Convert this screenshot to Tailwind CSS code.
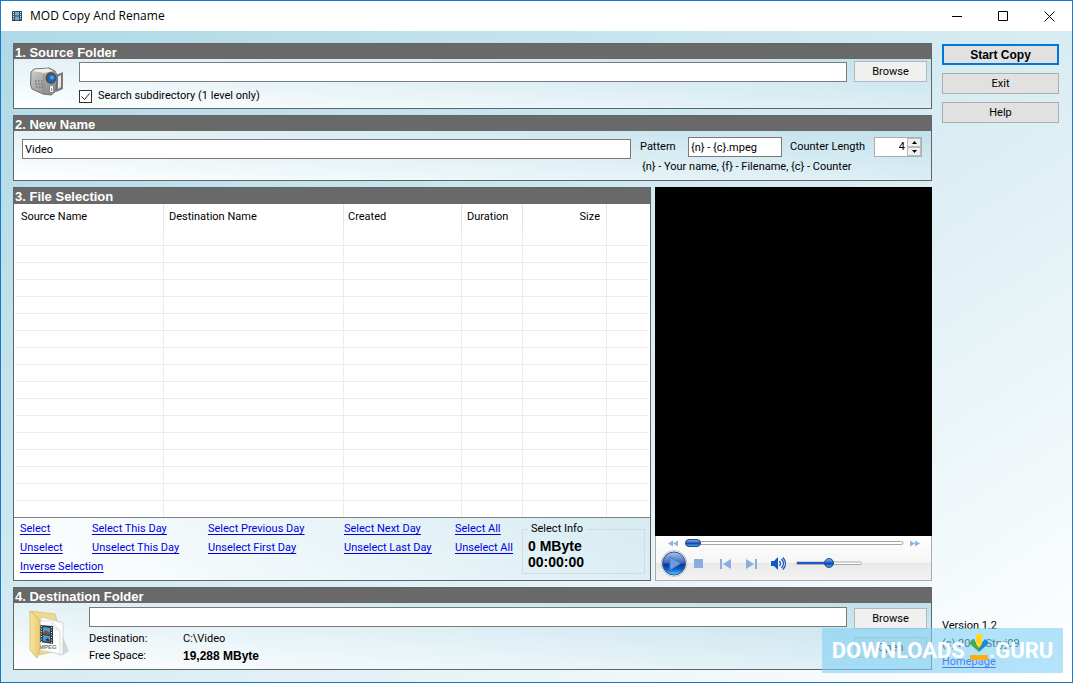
<!DOCTYPE html>
<html lang="en">
<head>
<meta charset="utf-8">
<title>MOD Copy And Rename</title>
<script src="https://cdn.jsdelivr.net/npm/@tailwindcss/browser@4"></script>
</head>
<body class="relative flex min-h-screen flex-col border border-[#1a78cc] bg-linear-to-br from-[#add8e6] to-white font-[Roboto,'Liberation_Sans',sans-serif] text-[11px] leading-4 text-black">
  <header class="flex h-[30px] shrink-0 items-center bg-white pl-[11px]">
    <svg class="mr-2 h-[10px] w-[10px]" viewBox="0 0 10 10"><path fill="#3b4c5c" d="M0 0h10v10H0z"/><path fill="#69aed6" d="M3 1h4v3.5H3zM3 5.5h4V9H3z"/><path fill="#e8eef2" d="M1 1h1v1H1zM1 3h1v1H1zM1 5h1v1H1zM1 7h1v1H1zM8 1h1v1H8zM8 3h1v1H8zM8 5h1v1H8zM8 7h1v1H8z"/></svg>
    <h1 class="flex-1 font-['Open_Sans','Noto_Sans',sans-serif] text-[12px]">MOD Copy And Rename</h1>
    <button class="flex h-[30px] w-[45px] items-center justify-center" aria-label="Minimize"><svg class="h-[11px] w-[11px]" viewBox="0 0 11 11"><path stroke="#000" d="M0 5.5h10"/></svg></button>
    <button class="flex h-[30px] w-[46px] items-center justify-center" aria-label="Maximize"><svg class="h-[11px] w-[11px]" viewBox="0 0 11 11"><path fill="none" stroke="#000" d="M.5.5h9v9h-9z"/></svg></button>
    <button class="flex h-[30px] w-[46px] items-center justify-center" aria-label="Close"><svg class="h-[11px] w-[11px]" viewBox="0 0 11 11"><path stroke="#000" d="M.5.5l10 10M10.500.5l-10 10"/></svg></button>
  </header>

  <div class="flex flex-1 gap-[10px] p-3 pr-[13px]">
    <main class="flex min-w-0 flex-1 flex-col gap-[6px]">
      <section class="border border-[#5f6668] bg-linear-to-tr from-white to-[#b9dde9]">
        <h2 class="h-[15px] bg-[#696969] pl-px font-['Liberation_Sans',Arial,sans-serif] text-[13px] leading-[18px] font-bold text-white">1. Source Folder</h2>
        <div class="flex h-[49px] pr-1">
          <svg class="mt-2 ml-4 h-[30px] w-[33px] shrink-0" viewBox="0 0 33 30">
            <defs><linearGradient id="cam" x2="1" y2="1"><stop stop-color="#cfcfcc"/><stop offset="1" stop-color="#7f7f7d"/></linearGradient></defs>
            <path fill="#77777c" d="M26 8l7-3v17l-7 3z"/><path fill="#e6e6f2" d="M28 9.500l3-1.500v12L28 22z"/>
            <path fill="url(#cam)" stroke="#6f6f6d" d="M1 5L4 2l15-1 6 3 2 4-1 16-5 4-8-1L2 22 .5 18z"/>
            <path fill="#efefed" d="M3 4l2-1.500 13-1 5 2.500-9 2z"/><path stroke="#777" d="M14 7v19" opacity=".5"/>
            <path stroke="#777" stroke-width="1.500" stroke-dasharray="1.500 1.500" d="M5 14h8M5 17h8M6 20h7"/>
            <ellipse cx="21" cy="11" rx="5.500" ry="6" fill="#4d5155"/><circle cx="21.500" cy="11.500" r="4" fill="#1b64b4"/><circle cx="22" cy="10.500" r="2" fill="#4fa2ea"/>
            <path fill="#eee" stroke="#888" d="M19.500 18.500h4v7h-4z"/><path fill="#999" d="M21 21h1v3h-1z"/>
          </svg>
          <div class="ml-4 flex-1 pt-[3px]">
            <input aria-label="Source folder" class="block h-5 w-full border border-[#7a7a7a] bg-white px-1 outline-none">
            <label class="mt-[6px] flex h-4 items-center gap-[6px]"><input type="checkbox" checked class="h-[13px] w-[13px] appearance-none border border-[#333] bg-white bg-[url('data:image/svg+xml,%3Csvg%20xmlns=%22http://www.w3.org/2000/svg%22%20viewBox=%220%200%2011%2011%22%3E%3Cpath%20d=%22M1.500%205.500l3%203%205-6%22%20fill=%22none%22%20stroke=%22%23222%22/%3E%3C/svg%3E')]">Search subdirectory (1 level only)</label>
          </div>
          <button class="mt-[2px] ml-[7px] h-[21px] w-[73px] border border-[#b5b8ba] bg-[#f0f0f0]">Browse</button>
        </div>
      </section>

      <section class="border border-[#5f6668] bg-linear-to-tr from-white to-[#b9dde9]">
        <h2 class="h-[15px] bg-[#696969] pl-px font-['Liberation_Sans',Arial,sans-serif] text-[13px] leading-[18px] font-bold text-white">2. New Name</h2>
        <div class="flex h-[49px] gap-[9px] pr-[9px] pl-2">
          <input aria-label="New name" value="Video" class="mt-2 h-5 min-w-0 flex-1 border border-[#7a7a7a] bg-white px-[2px] outline-none">
          <div class="w-[282px] pt-[6px]">
            <div class="flex h-5 items-center">
              <label for="pattern" class="w-12">Pattern</label>
              <input id="pattern" value="{n} - {c}.mpeg" class="h-5 w-[94px] border border-[#7a7a7a] bg-white px-[2px] outline-none">
              <label for="length" class="ml-2 flex-1">Counter Length</label>
              <div class="flex h-5 w-12 border border-[#abadb3] bg-white">
                <input id="length" value="4" class="min-w-0 flex-1 pr-[2px] text-right outline-none">
                <div class="flex w-[14px] flex-col">
                  <button aria-label="Increase" class="flex flex-1 items-center justify-center border border-[#bbb] bg-[#f0f0f0]"><svg class="h-[3px] w-[5px]" viewBox="0 0 5 3"><path d="M0 3h5L2.500 0z"/></svg></button>
                  <button aria-label="Decrease" class="flex flex-1 items-center justify-center border border-[#bbb] bg-[#f0f0f0]"><svg class="h-[3px] w-[5px]" viewBox="0 0 5 3"><path d="M0 0h5L2.500 3z"/></svg></button>
                </div>
              </div>
            </div>
            <p class="mt-[2px] pl-[2px]">{n} - Your name, {f} - Filename, {c} - Counter</p>
          </div>
        </div>
      </section>

      <div class="flex flex-1 gap-1">
        <section class="flex min-w-0 flex-1 flex-col border border-[#5f6668] bg-linear-to-tr from-white to-[#b9dde9]">
          <h2 class="h-4 bg-[#696969] pl-px font-['Liberation_Sans',Arial,sans-serif] text-[13px] leading-[18px] font-bold text-white">3. File Selection</h2>
          <div class="flex-1 border-b border-[#7a8286] bg-white px-px">
            <table class="w-full table-fixed border-separate border-spacing-0 [&_td]:h-[17px] [&_td]:border-r [&_td]:border-b [&_td]:border-[#ececec] [&_td]:p-0 [&_td:last-child]:border-r-0 [&_th]:h-[25px] [&_th]:border-r [&_th]:border-[#e5e5e5] [&_th]:p-0 [&_th]:text-left [&_th]:font-normal [&_th:last-child]:border-r-0">
              <thead><tr><th class="w-[149px]"><span class="pl-[6px]">Source Name</span></th><th class="w-[180px]"><span class="pl-[5px]">Destination Name</span></th><th class="w-[118px]"><span class="pl-[4px]">Created</span></th><th class="w-[61px]"><span class="pl-[5px]">Duration</span></th><th class="w-[84px]"><span class="block pr-[6px] text-right">Size</span></th><th></th></tr></thead>
              <tbody>
                <tr><td></td><td></td><td></td><td></td><td></td><td></td></tr>
                <tr><td></td><td></td><td></td><td></td><td></td><td></td></tr>
                <tr><td></td><td></td><td></td><td></td><td></td><td></td></tr>
                <tr><td></td><td></td><td></td><td></td><td></td><td></td></tr>
                <tr><td></td><td></td><td></td><td></td><td></td><td></td></tr>
                <tr><td></td><td></td><td></td><td></td><td></td><td></td></tr>
                <tr><td></td><td></td><td></td><td></td><td></td><td></td></tr>
                <tr><td></td><td></td><td></td><td></td><td></td><td></td></tr>
                <tr><td></td><td></td><td></td><td></td><td></td><td></td></tr>
                <tr><td></td><td></td><td></td><td></td><td></td><td></td></tr>
                <tr><td></td><td></td><td></td><td></td><td></td><td></td></tr>
                <tr><td></td><td></td><td></td><td></td><td></td><td></td></tr>
                <tr><td></td><td></td><td></td><td></td><td></td><td></td></tr>
                <tr><td></td><td></td><td></td><td></td><td></td><td></td></tr>
                <tr><td></td><td></td><td></td><td></td><td></td><td></td></tr>
                <tr><td></td><td></td><td></td><td></td><td></td><td></td></tr>
                <tr class="[&>td]:h-4 [&>td]:border-b-0"><td></td><td></td><td></td><td></td><td></td><td></td></tr>
              </tbody>
            </table>
          </div>
          <div class="flex h-[62px] pr-[5px] pl-[6px]">
            <nav class="grid flex-1 auto-rows-[19px] grid-cols-[72px_116px_136px_111px_1fr] pt-[3px] whitespace-nowrap text-[#0000e0] underline underline-offset-2">
              <a href="#">Select</a><a href="#">Select This Day</a><a href="#">Select Previous Day</a><a href="#">Select Next Day</a><a href="#">Select All</a>
              <a href="#">Unselect</a><a href="#">Unselect This Day</a><a href="#">Unselect First Day</a><a href="#">Unselect Last Day</a><a href="#">Unselect All</a>
              <a href="#">Inverse Selection</a>
            </nav>
            <fieldset class="mt-[3px] h-[53px] w-[123px] border border-[#cfdde2] pl-[5px] font-['Liberation_Sans',Arial,sans-serif] text-[14px] leading-4 font-bold">
              <legend class="px-[3px] font-[Roboto,'Liberation_Sans',sans-serif] text-[11px] leading-4 font-normal">Select Info</legend>
              <p class="pt-px">0 MByte</p><p>00:00:00</p>
            </fieldset>
          </div>
        </section>

        <section class="flex w-[277px] shrink-0 flex-col" aria-label="Preview">
          <div class="flex-1 bg-black"></div>
          <div class="h-[45px] border border-t-0 border-[#a9acae] bg-linear-to-b from-white via-[#f4f4f4] to-[#e4e4e4]">
            <svg class="h-[44px] w-full" viewBox="0 0 275 44">
              <defs>
                <linearGradient id="bar" x2="0" y2="1"><stop stop-color="#fff"/><stop offset=".6" stop-color="#f6f6f6"/><stop offset=".62" stop-color="#e9e9e9"/><stop offset="1" stop-color="#f3f3f3"/></linearGradient>
                <linearGradient id="pill" x2="0" y2="1"><stop stop-color="#8eb5ee"/><stop offset=".45" stop-color="#2d62c8"/><stop offset=".5" stop-color="#0a36a6"/><stop offset="1" stop-color="#55baf6"/></linearGradient>
                <linearGradient id="orb" x2="0" y2="1"><stop stop-color="#a9c2e8"/><stop offset=".48" stop-color="#3d68b8"/><stop offset=".52" stop-color="#0c3596"/><stop offset=".75" stop-color="#1259c8"/><stop offset="1" stop-color="#55d2ff"/></linearGradient>
              </defs>
              <path fill="url(#bar)" d="M0 0h275v44H0z"/>
              <path fill="#8db5e6" d="M12 7.500l5-3v6zM17 7.500l5-3v6zM254 4.500l5 3-5 3zM259 4.500l5 3-5 3z"/>
              <rect x="36" y="5.500" width="211" height="3" rx="1.500" fill="#fff" stroke="#a5a5a5"/>
              <rect x="29.500" y="3.500" width="15" height="7" rx="3.500" fill="url(#pill)" stroke="#244993"/>
              <circle cx="18" cy="27.500" r="13" fill="#f6f7fa" stroke="#c5c9d2"/><circle cx="18" cy="27.500" r="11.500" fill="url(#orb)" stroke="#34558e"/>
              <path fill="#6f9ae0" stroke="#4f7fc8" d="M14 21l10.500 6.500L14 34z"/>
              <path fill="#8bade2" d="M38 23h9v9h-9zM64 23h2v10h-2zM75 23v10l-8-5zM90 23v10l8-5zM99 23h2v10h-2z"/>
              <path fill="#1754c4" d="M115 25h3l4-4v13l-4-4h-3z"/><path fill="none" stroke="#1754c4" stroke-width="1.300" d="M123.500 25q2 2.500 0 5M125.500 23q4 4.500 0 9M127 21.500q5 6 0 12"/>
              <rect x="140.500" y="26" width="65" height="2.500" rx="1" fill="#fff" stroke="#aaa"/><path stroke="#1c59cf" stroke-width="2" d="M141 27h30"/>
              <circle cx="173" cy="27" r="4.500" fill="url(#pill)" stroke="#244993"/>
            </svg>
          </div>
        </section>
      </div>

      <section class="border border-[#5f6668] bg-linear-to-tr from-white to-[#b9dde9]">
        <h2 class="h-[15px] bg-[#696969] pl-px font-['Liberation_Sans',Arial,sans-serif] text-[13px] leading-[18px] font-bold text-white">4. Destination Folder</h2>
        <div class="flex h-[66px] pr-1">
          <svg class="mt-[6px] ml-[14px] h-[51px] w-[42px] shrink-0" viewBox="0 0 42 51">
            <defs><linearGradient id="fold"><stop stop-color="#f7e6a0"/><stop offset="1" stop-color="#e8c96f"/></linearGradient></defs>
            <path fill="#a9b0b3" opacity=".45" d="M30 46l5-18 6 14-6 4z"/>
            <path fill="#f0d98c" stroke="#d3ba6d" stroke-width=".7" d="M2 2l25 3 2 7v30L11 46z"/>
            <path fill="#fdfdfd" stroke="#c2c5c7" stroke-width=".7" d="M13 8l12 3 10 3v32l-23-6z"/><path fill="#fff" stroke="#c8cbcd" stroke-width=".7" d="M12 12h11l9 10v23l-20-4z"/>
            <path fill="#e8eaeb" d="M23 12l1 8 8 2z"/>
            <path fill="#333a40" d="M12 16l13 1v18l-13-2z"/><path fill="#4b9ed4" d="M15 18l7 1v14l-7-1z"/><path fill="#8a4a3a" d="M15 24l3-3 4 3v2l-7-1z"/><path fill="#24333d" d="M15 25l7 1v1l-7-1zM17 31l3-2 2 4z"/>
            <path stroke="#d7dde0" stroke-dasharray="1 1.500" d="M13.500 17v17M23.500 18v16"/>
            <text x="11" y="40" font-size="6" font-weight="bold" fill="#777" font-family="Liberation Sans">MPEG</text>
            <path fill="url(#fold)" stroke="#cdaf5e" stroke-width=".7" d="M2 2l10 9v28l-3 10-7-8z"/>
          </svg>
          <div class="ml-[19px] flex-1 pt-1">
            <input aria-label="Destination folder" class="block h-5 w-full border border-[#7a7a7a] bg-white px-1 outline-none">
            <dl class="mt-1 grid auto-rows-[17px] grid-cols-[94px_1fr]"><dt>Destination:</dt><dd>C:\Video</dd><dt>Free Space:</dt><dd class="font-['Liberation_Sans',Arial,sans-serif] text-[12px] font-bold">19,288 MByte</dd></dl>
          </div>
          <div class="ml-[7px] flex w-[73px] flex-col gap-2 pt-[5px]">
            <button class="h-[21px] border border-[#b5b8ba] bg-[#f0f0f0]">Browse</button>
            <button class="h-[21px] border border-[#b5b8ba] bg-[#d5e2e7]">Open</button>
          </div>
        </div>
      </section>
    </main>

    <aside class="flex w-[117px] shrink-0 flex-col gap-2 pt-px">
      <button class="h-[21px] border-2 border-[#0078d7] bg-[#e1e1e1] font-['Liberation_Sans',Arial,sans-serif] text-[12px] font-bold">Start Copy</button>
      <button class="h-[21px] border border-[#adadad] bg-[#e1e1e1]">Exit</button>
      <button class="h-[21px] border border-[#adadad] bg-[#e1e1e1]">Help</button>
      <div class="mt-auto flex flex-col gap-[2px]"><p>Version 1.2</p><p>(c) 2011 Stryj09</p><a href="#" class="text-[#0000e0] underline underline-offset-2">Homepage</a></div>
    </aside>
  </div>

  <div class="absolute right-[9px] bottom-[9px] flex h-[45px] w-[241px] items-center justify-center bg-[#80d0f5]/60 font-['Liberation_Sans_Narrow',Roboto,sans-serif] text-[22px] font-bold text-white">
    <span>DOWNLOADS</span>
    <svg class="mb-2 ml-1 h-[26px] w-[20px] shrink-0" viewBox="0 0 20 26"><path fill="#43ac49" d="M0 9l4-4 6 7v6z"/><path fill="#168ed0" d="M20 9l-4-4-6 7v6z"/><path fill="#ffd52e" d="M7 0h6v10l-3 4-3-4z"/><rect x="1" y="21" width="18" height="5" rx="1" fill="#f9ad16"/></svg>
    <span>.GURU</span>
  </div>
</body>
</html>
